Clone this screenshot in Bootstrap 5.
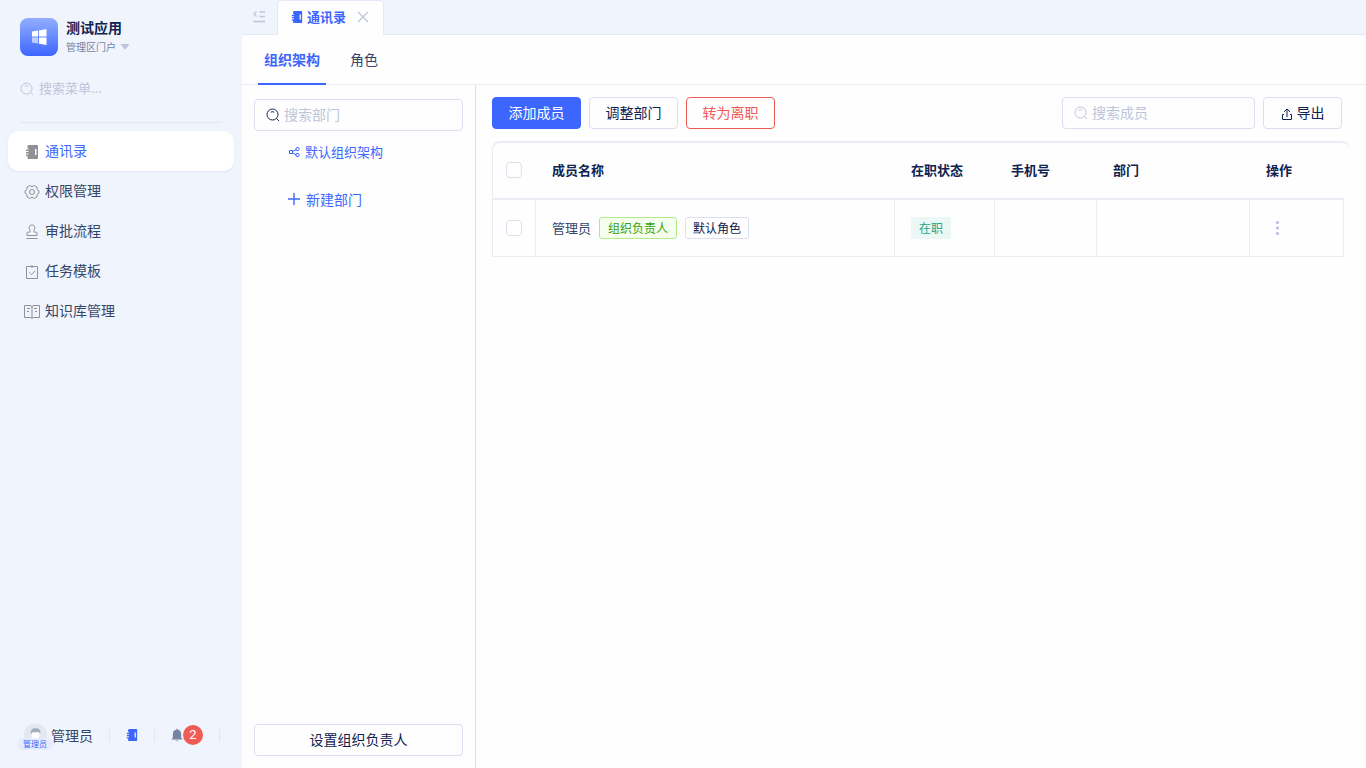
<!DOCTYPE html>
<html lang="zh-CN">
<head>
<meta charset="utf-8">
<meta name="viewport" content="width=device-width, initial-scale=1">
<title>通讯录</title>
<link href="https://cdn.jsdelivr.net/npm/bootstrap@5.3.0/dist/css/bootstrap.min.css" rel="stylesheet">
<style>
:root{--brand:#3d66ff;--ink:#0f2250;--text:#36466b;--mute:#bcc5da;--line:#dcdfee;--hair:#ececf5;--bg:#f0f4fd}
body{font-family:"Noto Sans CJK SC",sans-serif;font-size:14px;line-height:20px;color:var(--text);background:#fefefe}
a{text-decoration:none;color:inherit}
svg{flex:none}
.line-icon{fill:none;stroke:currentColor}
.side{width:242px;background:var(--bg)}
.brand{padding:18px 20px 0;gap:8px}
.brand-logo{width:38px;height:38px;border-radius:8px;background:linear-gradient(#93aeff,#3d66ff)}
.brand-title{color:var(--ink);font-weight:700;line-height:18px}
.brand-sub{font-size:10px;line-height:22px;color:#7483a3}
.side-search{height:32px;font-size:13px;color:var(--mute);margin:15px 20px 0;gap:5px}
.bare{border:0;background:none;outline:0;padding:0;color:var(--ink)}
.bare::placeholder{color:var(--mute);opacity:1}
.side-search input{padding-bottom:2px}
.rule{height:1px;background:#e3e7f2;margin:17px 20px 8px}
.menu-item{height:40px;border-radius:10px;padding:0 16px 2px;gap:5px}
.menu-item svg{color:#8f9194;margin-top:3px}
.menu-item.active{background:#fff;color:var(--brand);box-shadow:0 1px 2px #dfe4f0}
.avatar{width:27px}
.avatar-tag{left:-7px;bottom:-3px;font-size:8px;line-height:12px;padding:0 6px;border-radius:6px;background:#e4eafdcc;color:var(--brand);white-space:nowrap}
.foot{height:66px;padding-left:24px;gap:16px}
.sep{width:1px;height:13px;background:#e1e6f1}
.quick{color:var(--brand)}
.count{width:20px;height:20px;border-radius:10px;background:#f15b56;color:#fff;font:13px/20px Roboto,sans-serif;text-align:center}
.topbar{height:35px;background:var(--bg);border-bottom:1px solid #e6e9f5}
.fold{width:35px;color:#bcc5da;padding-left:9px}
.page-tab{height:35px;margin-bottom:-1px;padding:0 0 2px 13px;width:107px;background:#fefefe;border:1px solid #e6e9f5;border-bottom:0;border-radius:4px 4px 0 0;color:var(--brand);font-weight:700;font-size:13px}
.page-tab .close-x{color:#bcc5da}
.subnav{height:50px;border-bottom:1px solid var(--hair);padding:0 16px;gap:18px}
.subnav a{padding:0 6px;border-bottom:2px solid transparent;margin-bottom:-1px;line-height:48px}
.subnav a.active{color:var(--brand);font-weight:700;border-color:var(--brand)}
.dept{width:234px;border-right:1px solid #dcdfea;padding:14px 12px 12px}
.field{height:32px;border:1px solid var(--line);border-radius:4px;padding:0 11px;gap:4px;background:#fefefe}
.field input{min-width:0;padding-bottom:2px}
.member-field{width:193px}
.btn{--bs-btn-font-size:14px;--bs-btn-line-height:20px;--bs-btn-border-radius:4px;height:32px;min-width:89px;padding:4px 0 6px}
.btn-brand{--bs-btn-color:#fff;--bs-btn-bg:var(--brand);--bs-btn-border-color:var(--brand)}
.btn-plain{--bs-btn-color:var(--ink);--bs-btn-border-color:var(--line);--bs-btn-bg:#fefefe}
.btn-warn{--bs-btn-color:#f15b56;--bs-btn-border-color:#f15b56;--bs-btn-bg:#fefefe}
.btn-export{min-width:79px}
.tree{padding:6px 0 0 32px;gap:14px}
.tree a{height:32px;color:var(--brand)}
.tree .org-root{font-size:13px;padding:0 0 2px 2px}
.members{padding:12px 16px 0}
.grid-box{margin-top:12px;border:solid var(--hair);border-width:2px 0 0 1px;border-radius:8px 8px 0 0;padding-right:6px}
.grid{table-layout:fixed;width:100%;border-collapse:separate;border-spacing:0;font-size:13px}
.grid th,.grid td{padding:0 0 0 16px}
.grid th{height:57px;padding-bottom:2px;color:var(--ink);font-weight:700;border-bottom:2px solid var(--hair)}
.grid td{height:57px;border:solid var(--hair);border-width:0 1px 1px 0}
.grid .pick{padding-left:13px}
.form-check-input{display:block;width:16px;height:16px;margin:0;border:1px solid var(--line);border-radius:4px!important}
.chip{font-size:12px;line-height:20px;padding:0 8px;border:1px solid var(--line);border-radius:3px;color:var(--ink)}
.chip-green{padding:0 8px;color:#389e0d;background:#f6ffed;border-color:#b2ea89}
.chip-dark{padding:0 7px}
.chip-teal{color:#2aa587;background:#eaf7f5;border:0;line-height:22px;border-radius:2px}
</style>
</head>
<body>
<svg class="d-none">
<symbol id="i-search" viewBox="0 0 14 14"><circle cx="6.500" cy="6.500" r="5.500"/><path d="M10.500 10.500l2.500 2.500M4.800 4.200q1.700-1 3.400 0"/></symbol>
<symbol id="i-book" viewBox="0 0 14 14"><path fill="currentColor" stroke="none" fill-rule="evenodd" d="M3.500 0H12a1 1 0 0 1 1 1v12a1 1 0 0 1-1 1H3.500a1 1 0 0 1-1-1v-2H1V9.500h2.500v-1H1V7h2.500V6H1V4.500h2.500v-1h-1V1a1 1 0 0 1 1-1zM10 4v6h1.500V4z"/></symbol>
</svg>
<div class="d-flex vh-100">
<aside class="side d-flex flex-column flex-shrink-0">
  <div class="brand d-flex">
    <div class="brand-logo d-flex align-items-center justify-content-center"><svg width="16" height="16" viewBox="0 0 16 16"><path fill="#fff" d="M1 2.600l6-1V7.500H1zM8 1.400L15.500 0v7.500H8zM8 8.500h7.500V16L8 14.800z"/><path fill="#fff" opacity=".6" d="M1 8.500h6v6l-6-1z"/></svg></div>
    <div>
      <div class="brand-title">测试应用</div>
      <div class="brand-sub d-flex align-items-center">管理区门户<svg class="ms-1" width="10" height="6" viewBox="0 0 10 6"><path fill="#bcc5da" d="M.5 0h9L6 4.800q-1 1-2 0z"/></svg></div>
    </div>
  </div>
  <label class="side-search d-flex align-items-center"><svg class="line-icon" width="14" height="14"><use href="#i-search"/></svg><input class="bare w-75" placeholder="搜索菜单..." aria-label="搜索菜单"></label>
  <div class="rule"></div>
  <nav class="px-2">
    <a href="#" class="menu-item active d-flex align-items-center"><svg width="16" height="16" viewBox="0 0 16 16"><use href="#i-book" x="1" y="1" width="14" height="14"/></svg>通讯录</a>
    <a href="#" class="menu-item d-flex align-items-center"><svg class="line-icon" width="16" height="16" viewBox="0 0 16 16"><path d="M5.500 1.600Q8 3.600 10.500 1.600L12.900 3Q12.300 6 15 7v2q-2.700 1-2.100 4l-2.400 1.400q-2.500-2-5 0L3.100 13Q3.700 10 1 9V7q2.700-1 2.100-4z"/><circle cx="8" cy="8" r="2.500"/></svg>权限管理</a>
    <a href="#" class="menu-item d-flex align-items-center"><svg class="line-icon" width="16" height="16" viewBox="0 0 16 16"><path d="M2.500 14.500h11M3 11.500V9.200q0-1 1-1h1.600q1.200-1.200 0-2.800a2.900 2.900 0 1 1 4.800 0q-1.200 1.600 0 2.800H12q1 0 1 1v2.300z"/></svg>审批流程</a>
    <a href="#" class="menu-item d-flex align-items-center"><svg class="line-icon" width="16" height="16" viewBox="0 0 16 16"><path d="M6 2.500H2.500v12h11v-12H10M6 2.500h4M8 1v3M5.300 8.400l2.200 2.200 3.500-3.700"/></svg>任务模板</a>
    <a href="#" class="menu-item d-flex align-items-center"><svg class="line-icon" width="16" height="16" viewBox="0 0 16 16"><path d="M8 3.500v11M6.500 13.500h-6v-12H6Q8 1.500 8 3.500q0-2 2-2h5.500v12h-6L8 14.500zM3 4.500h3M3 7.500h2M10 4.500h3M11 7.500h2"/></svg>知识库管理</a>
  </nav>
  <footer class="foot mt-auto d-flex align-items-center">
    <div class="d-flex align-items-center"><div class="avatar position-relative"><svg class="d-block" width="23" height="24" viewBox="0 0 24 24"><circle cx="12" cy="12" r="12" fill="#e2e7f0"/><path fill="#fff" d="M4 20q2-4 8-4t8 4q-3 4-8 4t-8-4zM8 9h8v4q0 5-4 5t-4-5z"/><path fill="#a3adbd" d="M7 11Q6 5 12 5t5 6q-1-2-3-2.500-3 1-5 .5-1 1-2 2z"/></svg><span class="avatar-tag position-absolute">管理员</span></div>管理员</div>
    <span class="sep"></span>
    <a href="#" class="quick" aria-label="通讯录"><svg class="d-block" width="12" height="12"><use href="#i-book"/></svg></a>
    <span class="sep"></span>
    <a href="#" class="d-flex align-items-center" aria-label="通知"><svg width="12" height="14" viewBox="0 0 13 14"><path fill="#76859f" d="M6.500 0l1 1.200Q11 2 11 6v4l1.500 1.500v.5H.5v-.5L2 10V6q0-4 3.500-4.800zM4.500 13h4q-2 1.500-4 0z"/></svg><span class="count">2</span></a>
    <span class="sep"></span>
  </footer>
</aside>
<div class="flex-grow-1 d-flex flex-column overflow-hidden">
  <header class="topbar d-flex flex-shrink-0">
    <button class="bare fold d-flex align-items-center" aria-label="收起菜单"><svg class="line-icon" width="16" height="14" viewBox="0 0 16 14" stroke-width="1.300"><path d="M5.500 1.500L3 4l2.500 2.500M8.500 2H14M8.500 6.500H14M2.500 11.500H14"/></svg></button>
    <a href="#" class="page-tab d-flex align-items-center"><svg width="12" height="12"><use href="#i-book"/></svg><span class="ms-1 me-2">通讯录</span><svg class="line-icon close-x" width="16" height="12" viewBox="0 0 16 12" stroke-width="1.200"><path d="M4 1l10 10M14 1L4 11"/></svg></a>
  </header>
  <nav class="subnav d-flex flex-shrink-0"><a href="#" class="active">组织架构</a><a href="#">角色</a></nav>
  <div class="d-flex flex-grow-1">
    <section class="dept d-flex flex-column flex-shrink-0">
      <label class="field d-flex align-items-center"><svg class="line-icon" width="14" height="14" color="#0f2250"><use href="#i-search"/></svg><input class="bare flex-grow-1" placeholder="搜索部门" aria-label="搜索部门"></label>
      <div class="tree d-flex flex-column">
        <a href="#" class="org-root d-flex align-items-center"><svg class="line-icon me-1" width="13" height="12" viewBox="0 0 13 12"><path d="M1.500 4.500h3v3h-3zM4.500 5.500l4-2M4.500 7l4 2"/><rect x="8" y="1.500" width="3" height="3" rx="1"/><rect x="8" y="7.500" width="3" height="3" rx="1"/></svg>默认组织架构</a>
        <a href="#" class="d-flex align-items-center"><svg class="line-icon me-1" width="16" height="12" viewBox="0 0 16 12"><path stroke-width="1.400" d="M2 6h12M8 0v12"/></svg>新建部门</a>
      </div>
      <button class="btn btn-plain mt-auto">设置组织负责人</button>
    </section>
    <main class="members flex-grow-1">
      <div class="d-flex gap-2 pe-2">
        <button class="btn btn-brand">添加成员</button><button class="btn btn-plain">调整部门</button><button class="btn btn-warn">转为离职</button>
        <label class="field member-field d-flex align-items-center ms-auto"><svg class="line-icon" width="14" height="14" color="#bcc5da"><use href="#i-search"/></svg><input class="bare flex-grow-1" placeholder="搜索成员" aria-label="搜索成员"></label>
        <button class="btn btn-plain btn-export d-flex align-items-center justify-content-center"><svg class="line-icon me-1 mt-1" width="12" height="12" viewBox="1 1 12 12"><path d="M4 7.500H2.500v5h9v-5H10M7 10V2M4 4.800L7 2l3 2.800"/></svg>导出</button>
      </div>
      <div class="grid-box">
        <table class="grid">
          <colgroup><col style="width:43px"><col><col style="width:100px"><col style="width:102px"><col style="width:153px"><col style="width:94px"></colgroup>
          <thead><tr><th class="pick"><input class="form-check-input" type="checkbox" aria-label="全选"></th><th>成员名称</th><th>在职状态</th><th>手机号</th><th>部门</th><th>操作</th></tr></thead>
          <tbody><tr><td class="pick"><input class="form-check-input" type="checkbox" aria-label="选择管理员"></td>
            <td><div class="d-flex align-items-center gap-2">管理员<span class="chip chip-green">组织负责人</span><span class="chip chip-dark">默认角色</span></div></td>
            <td><span class="chip chip-teal d-inline-block">在职</span></td><td></td><td></td>
            <td><button class="bare d-block ms-2" aria-label="更多操作"><svg class="d-block" width="7" height="16" viewBox="0 0 7 16"><g fill="#b5bfd7"><circle cx="3.500" cy="2.500" r="1.600"/><circle cx="3.500" cy="8" r="1.600"/><circle cx="3.500" cy="13.500" r="1.600"/></g></svg></button></td></tr></tbody>
        </table>
      </div>
    </main>
  </div>
</div>
</div>
<script src="https://cdn.jsdelivr.net/npm/bootstrap@5.3.0/dist/js/bootstrap.bundle.min.js"></script>
</body>
</html>
